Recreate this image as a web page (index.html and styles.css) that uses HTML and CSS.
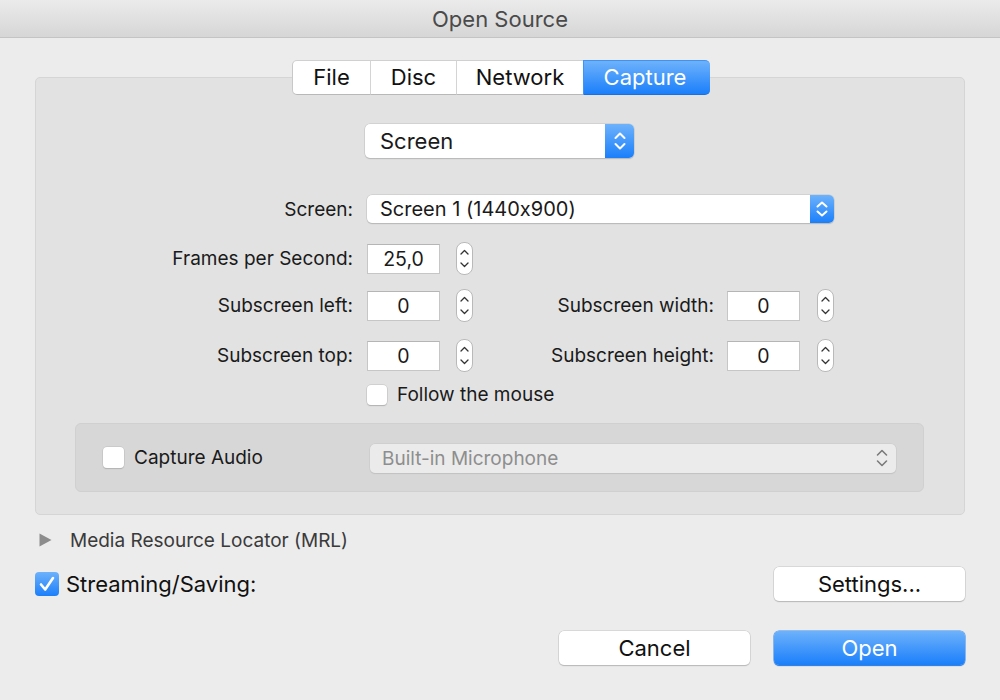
FILE: index.html
```html
<!DOCTYPE html>
<html>
<head>
<meta charset="utf-8">
<link rel="stylesheet" href="styles.css">
</head>
<body>
<div class="window">
  <div class="titlebar">Open Source</div>
  <div class="content">
    <div class="tabs">
      <div class="seg seg-file">File</div>
      <div class="seg seg-disc">Disc</div>
      <div class="seg seg-net">Network</div>
      <div class="seg seg-cap active">Capture</div>
    </div>
    <div class="panel">
      <div class="popup popup-mode">
        <span class="popup-text">Screen</span>
        <span class="popup-arrow"><svg width="14" height="22" viewBox="0 0 14 22"><path d="M2.5 8 L7 3.5 L11.5 8 M2.5 14 L7 18.5 L11.5 14" fill="none" stroke="#fff" stroke-width="2" stroke-linecap="round" stroke-linejoin="round"/></svg></span>
      </div>
      <div class="form">
        <div class="row row-screen">
          <span class="label c1">Screen:</span>
          <div class="popup popup-screen">
            <span class="popup-text">Screen 1 (1440x900)</span>
            <span class="popup-arrow"><svg width="14" height="20" viewBox="0 0 14 20"><path d="M2.5 7.5 L7 3.5 L11.5 7.5 M2.5 12.5 L7 16.5 L11.5 12.5" fill="none" stroke="#fff" stroke-width="2" stroke-linecap="round" stroke-linejoin="round"/></svg></span>
          </div>
        </div>
        <div class="row row-fps">
          <span class="label c1">Frames per Second:</span>
          <div class="field c3">25,0</div>
          <div class="stepper c5"><svg width="17" height="33" viewBox="0 0 17 33"><rect x="0.5" y="0.5" width="16" height="32" rx="7.5" fill="#fff" stroke="#b9b9b9"/><path d="M5 12 L8.5 8.5 L12 12 M5 21 L8.5 24.5 L12 21" fill="none" stroke="#333" stroke-width="1.3" stroke-linecap="round" stroke-linejoin="round"/></svg></div>
        </div>
        <div class="row row-left">
          <span class="label c1">Subscreen left:</span>
          <div class="field c3">0</div>
          <div class="stepper c5"><svg width="17" height="33" viewBox="0 0 17 33"><rect x="0.5" y="0.5" width="16" height="32" rx="7.5" fill="#fff" stroke="#b9b9b9"/><path d="M5 12 L8.5 8.5 L12 12 M5 21 L8.5 24.5 L12 21" fill="none" stroke="#333" stroke-width="1.3" stroke-linecap="round" stroke-linejoin="round"/></svg></div>
          <span class="label c6">Subscreen width:</span>
          <div class="field c8">0</div>
          <div class="stepper c10"><svg width="17" height="33" viewBox="0 0 17 33"><rect x="0.5" y="0.5" width="16" height="32" rx="7.5" fill="#fff" stroke="#b9b9b9"/><path d="M5 12 L8.5 8.5 L12 12 M5 21 L8.5 24.5 L12 21" fill="none" stroke="#333" stroke-width="1.3" stroke-linecap="round" stroke-linejoin="round"/></svg></div>
        </div>
        <div class="row row-top">
          <span class="label c1">Subscreen top:</span>
          <div class="field c3">0</div>
          <div class="stepper c5"><svg width="17" height="33" viewBox="0 0 17 33"><rect x="0.5" y="0.5" width="16" height="32" rx="7.5" fill="#fff" stroke="#b9b9b9"/><path d="M5 12 L8.5 8.5 L12 12 M5 21 L8.5 24.5 L12 21" fill="none" stroke="#333" stroke-width="1.3" stroke-linecap="round" stroke-linejoin="round"/></svg></div>
          <span class="label c6">Subscreen height:</span>
          <div class="field c8">0</div>
          <div class="stepper c10"><svg width="17" height="33" viewBox="0 0 17 33"><rect x="0.5" y="0.5" width="16" height="32" rx="7.5" fill="#fff" stroke="#b9b9b9"/><path d="M5 12 L8.5 8.5 L12 12 M5 21 L8.5 24.5 L12 21" fill="none" stroke="#333" stroke-width="1.3" stroke-linecap="round" stroke-linejoin="round"/></svg></div>
        </div>
        <div class="row row-follow">
          <label class="check-line c3wide"><span class="checkbox"></span><span class="check-text">Follow the mouse</span></label>
        </div>
      </div>
      <div class="audio">
        <label class="check-line audio-check"><span class="checkbox"></span><span class="check-text">Capture Audio</span></label>
        <div class="popup popup-disabled">
          <span class="popup-text">Built-in Microphone</span>
          <span class="popup-arrow-gray"><svg width="14" height="22" viewBox="0 0 14 22"><path d="M2.5 8 L7 3.5 L11.5 8 M2.5 14 L7 18.5 L11.5 14" fill="none" stroke="#7a7a7a" stroke-width="1.6" stroke-linecap="round" stroke-linejoin="round"/></svg></span>
        </div>
      </div>
    </div>
    <div class="mrl">
      <svg class="disclosure" width="13" height="14" viewBox="0 0 13 14"><path d="M0.5 0.5 L12.5 7 L0.5 13.5 Z" fill="#8c8c8c"/></svg>
      <span class="mrl-text">Media Resource Locator (MRL)</span>
    </div>
    <div class="stream-row">
      <label class="check-line stream-check">
        <span class="checkbox-on"><svg width="24" height="24" viewBox="0 0 24 24"><path d="M6 12.5 L10.2 17.5 L18 6" fill="none" stroke="#fff" stroke-width="2.6" stroke-linecap="round" stroke-linejoin="round"/></svg></span>
        <span class="stream-text">Streaming/Saving:</span>
      </label>
      <div class="button">Settings...</div>
    </div>
    <div class="buttons">
      <div class="button">Cancel</div>
      <div class="button primary">Open</div>
    </div>
  </div>
</div>
</body>
</html>
```

FILE: styles.css
```css
* { box-sizing: border-box; }
html, body { margin: 0; padding: 0; }
body {
  width: 1000px;
  height: 700px;
  overflow: hidden;
  background: #ececec;
  font-family: Inter, "Noto Sans", sans-serif;
  font-feature-settings: "calt" 0;
  color: #1a1a1a;
}
.window { width: 1000px; height: 700px; background: #ececec; }
.titlebar {
  height: 38px;
  background: linear-gradient(#ebebeb, #d6d6d6);
  border-bottom: 1px solid #c4c4c4;
  text-align: center;
  line-height: 38px;
  font-size: 22px;
  color: #4a4a4a;
}
.content { padding: 0 35px 0 35px; }
.tabs {
  display: flex;
  justify-content: center;
  margin-top: 22px;
  position: relative;
  z-index: 1;
  padding-left: 2px;
}
.seg {
  height: 35px;
  background: #fff;
  border-top: 1px solid #d0d0d0;
  border-bottom: 1px solid #b8b8b8;
  border-left: 1px solid #d4d4d4;
  font-size: 22px;
  line-height: 33px;
  text-align: center;
  color: #111;
}
.seg-file { width: 78px; border-left: 1px solid #c8c8c8; border-radius: 5px 0 0 5px; }
.seg-disc { width: 86px; }
.seg-net { width: 127px; }
.seg-cap { width: 127px; border-radius: 0 5px 5px 0; padding-right: 4px; }
.seg.active {
  background: linear-gradient(#6db2fb, #1b7ffa);
  color: #fff;
  border-color: #3f93f8;
  border-bottom-color: #1a70e0;
}
.panel {
  margin-top: -18px;
  height: 438px;
  background: #e2e2e2;
  border: 1px solid #d5d5d5;
  border-radius: 5px;
  padding-top: 46px;
  display: flex;
  flex-direction: column;
}
.popup {
  display: flex;
  align-items: center;
  background: #fff;
  border-radius: 5px;
  box-shadow: 0 0 0 0.5px #c2c2c2, 0 1px 1px #b0b0b0;
  overflow: hidden;
}
.popup-text { flex: 1; padding-left: 13px; }
.popup-mode {
  align-self: center;
  width: 269px;
  height: 34px;
  font-size: 22px;
  margin-left: -1px;
}
.popup-mode .popup-text { padding-left: 15px; }
.popup-arrow {
  width: 29px;
  height: 100%;
  background: linear-gradient(#6db2fb, #1b7ffa);
  display: flex;
  align-items: center;
  justify-content: center;
}
.popup-screen {
  grid-column: 3 / 11;
  height: 28px;
  font-size: 20px;
}
.popup-screen .popup-arrow { width: 24px; }
.form { margin-top: 37px; }
.row {
  display: grid;
  grid-template-columns: 317px 14px 73px 16px 17px 241px 13px 73px 17px 17px;
  align-items: center;
}
.row-screen { height: 28px; }
.row-fps { height: 30px; margin-top: 19px; }
.row-left { height: 30px; margin-top: 17px; }
.row-top { height: 30px; margin-top: 20px; }
.row-follow { height: 20px; margin-top: 14px; }
.label { font-size: 19px; text-align: right; color: #1a1a1a; }
.c1 { grid-column: 1; }
.c3 { grid-column: 3; }
.c5 { grid-column: 5; }
.c6 { grid-column: 6; }
.c8 { grid-column: 8; }
.c10 { grid-column: 10; }
.c3wide { grid-column: 3 / 8; }
.field {
  height: 30px;
  background: #fff;
  border: 1px solid #c6c6c6;
  border-top-color: #b5b5b5;
  font-size: 19.5px;
  line-height: 28px;
  text-align: center;
}
.stepper { height: 33px; display: flex; align-items: center; }
.stepper svg { display: block; }
.check-line { display: flex; align-items: center; }
.checkbox {
  width: 20px;
  height: 20px;
  background: #fff;
  border-radius: 4px;
  box-shadow: 0 0 0 0.5px #bdbdbd, 0 1px 1px #aaaaaa;
  flex: none;
}
.check-text { font-size: 19px; margin-left: 10px; color: #1a1a1a; }
.audio {
  margin: 20px 40px 0 39px;
  height: 69px;
  background: #d7d7d7;
  border: 1px solid #d0d0d0;
  border-radius: 6px;
  display: flex;
  align-items: center;
  padding-left: 27px;
}
.audio-check { width: 267px; }
.audio-check .checkbox { width: 21px; height: 21px; }
.popup-disabled {
  width: 526px;
  height: 29px;
  background: #ebebeb;
  font-size: 19px;
  color: #8e8e8e;
  box-shadow: 0 0 0 0.5px #c8c8c8, 0 1px 1px #bdbdbd;
  margin-top: 1px;
}
.popup-disabled .popup-text { padding-left: 12px; }
.popup-arrow-gray { width: 28px; display: flex; align-items: center; justify-content: center; }
.mrl {
  display: flex;
  align-items: center;
  height: 20px;
  margin-top: 15px;
  padding-left: 4px;
}
.disclosure { display: block; }
.mrl-text { margin-left: 18px; font-size: 19px; color: #3a3a3a; }
.stream-row {
  display: flex;
  justify-content: space-between;
  align-items: center;
  margin-top: 17px;
}
.checkbox-on {
  width: 24px;
  height: 24px;
  border-radius: 4px;
  background: linear-gradient(#6db2fb, #1b7ffa);
  display: flex;
  flex: none;
}
.stream-text { margin-left: 7px; font-size: 22px; color: #111; }
.button {
  width: 191px;
  height: 34px;
  background: #fff;
  border-radius: 5px;
  box-shadow: 0 0 0 0.5px #c4c4c4, 0 1px 1px #aeaeae;
  font-size: 22px;
  line-height: 34px;
  text-align: center;
  color: #111;
}
.buttons {
  display: flex;
  justify-content: flex-end;
  gap: 24px;
  margin-top: 30px;
}
.button.primary {
  background: linear-gradient(#6db2fb, #1b7ffa);
  color: #fff;
  box-shadow: 0 0 0 0.5px #3a8cf0, 0 1px 1px #1a6bd0;
}
```
